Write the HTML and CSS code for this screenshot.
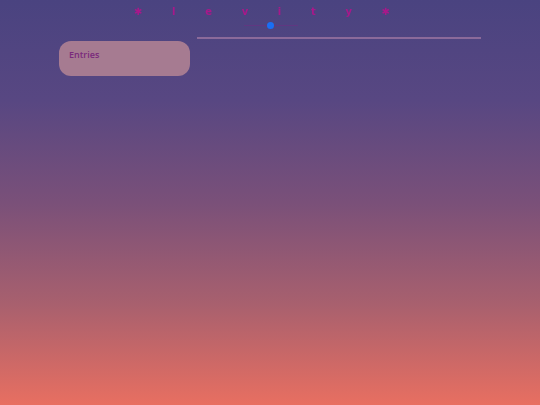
FILE: index.html
```html
<!DOCTYPE html>
<html>
<head>
<meta charset="utf-8">
<link rel="stylesheet" href="styles.css">
</head>
<body>
<div class="page">
  <div class="title">
    <span>✱</span><span>l</span><span>e</span><span>v</span><span>i</span><span>t</span><span>y</span><span>✱</span>
  </div>
  <div class="slider">
    <div class="track"><div class="knob"></div></div>
  </div>
  <div class="main">
    <div class="card"><div class="card-label">Entries</div></div>
    <div class="divider"></div>
  </div>
</div>
</body>
</html>
```

FILE: styles.css
```css
html, body {
  margin: 0;
  padding: 0;
  height: 100%;
}
body {
  background: linear-gradient(to bottom, #4a4380 0%, #584782 25%, #7a5079 50%, #a8606e 75%, #e86f61 100%);
  font-family: "Open Sans", sans-serif;
  overflow: hidden;
}
.page {
  width: 540px;
  height: 405px;
}
.title {
  display: flex;
  justify-content: space-between;
  width: 256px;
  margin-left: 134px;
  padding-top: 5px;
  height: 14px;
  font-family: "DejaVu Sans", sans-serif;
  font-size: 10px;
  font-weight: bold;
  line-height: 14px;
  color: #a8188a;
  filter: blur(0.5px);
}
.slider {
  display: flex;
  justify-content: center;
  height: 12px;
}
.track {
  position: relative;
  width: 54px;
  height: 1px;
  margin-top: 6px;
  margin-left: 2px;
  background: rgba(120, 40, 130, 0.45);
}
.knob {
  position: absolute;
  left: 23px;
  top: -3.5px;
  width: 7px;
  height: 7px;
  border-radius: 50%;
  background: #1a6ff5;
}
.main {
  display: flex;
  align-items: flex-start;
  margin-left: 59px;
}
.card {
  width: 131px;
  height: 35px;
  margin-top: 10px;
  border-radius: 12px;
  background: #a67b91;
  box-sizing: border-box;
  padding: 8px 10px;
}
.card-label {
  font-size: 9px;
  font-weight: 600;
  color: #7a2a7c;
  line-height: 12px;
}
.divider {
  width: 284px;
  height: 2px;
  margin-left: 7px;
  margin-top: 6px;
  background: #8b6a9a;
}
```
